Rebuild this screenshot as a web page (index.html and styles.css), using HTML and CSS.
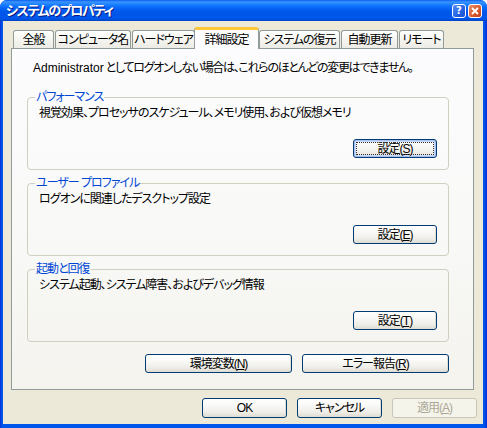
FILE: index.html
```html
<!DOCTYPE html>
<html lang="ja">
<head>
<meta charset="utf-8">
<title>システムのプロパティ</title>
<link rel="stylesheet" href="styles.css">
</head>
<body>
<div class="window">
  <div class="titlebar">
    <span class="title">システムのプロパティ</span>
    <div class="caption-buttons">
      <span class="cap-btn help">?</span>
      <span class="cap-btn close">
        <svg width="8" height="8" viewBox="0 0 8 8"><path d="M1 1 L7 7 M7 1 L1 7" stroke="#fff" stroke-width="1.8" fill="none"/></svg>
      </span>
    </div>
  </div>
  <div class="client">
    <div class="tabs">
      <div class="tab t1">全般</div>
      <div class="tab t2">コンピュータ名</div>
      <div class="tab t3">ハードウェア</div>
      <div class="tab t4 selected">詳細設定</div>
      <div class="tab t5">システムの復元</div>
      <div class="tab t6">自動更新</div>
      <div class="tab t7">リモート</div>
    </div>
    <div class="panel">
      <p class="note"><span class="latin">Administrator</span> としてログオンしない場合は、これらのほとんどの変更はできません。</p>
      <fieldset class="group">
        <legend>パフォーマンス</legend>
        <p class="desc">視覚効果、プロセッサのスケジュール、メモリ使用、および仮想メモリ</p>
        <div class="group-actions"><button class="btn default">設定(<u>S</u>)</button></div>
      </fieldset>
      <fieldset class="group">
        <legend>ユーザー プロファイル</legend>
        <p class="desc">ログオンに関連したデスクトップ設定</p>
        <div class="group-actions"><button class="btn">設定(<u>E</u>)</button></div>
      </fieldset>
      <fieldset class="group">
        <legend>起動と回復</legend>
        <p class="desc">システム起動、システム障害、およびデバッグ情報</p>
        <div class="group-actions"><button class="btn">設定(<u>T</u>)</button></div>
      </fieldset>
      <div class="panel-actions">
        <button class="btn wide">環境変数(<u>N</u>)</button>
        <button class="btn wide">エラー報告(<u>R</u>)</button>
      </div>
    </div>
    <div class="dialog-actions">
      <button class="btn dlg">OK</button>
      <button class="btn dlg">キャンセル</button>
      <button class="btn dlg disabled">適用(<u>A</u>)</button>
    </div>
  </div>
</div>
</body>
</html>
```

FILE: styles.css
```css
html, body {
  margin: 0;
  padding: 0;
  background: #ffffff;
}

body {
  font-family: "Liberation Sans", "Noto Sans CJK JP", sans-serif;
  font-size: 12px;
  font-feature-settings: "palt";
  letter-spacing: -1px;
  color: #000;
}

.window {
  width: 487px;
  height: 428px;
  box-sizing: border-box;
  display: flex;
  flex-direction: column;
  background: linear-gradient(to right, #0831D9 0, #0055EA 2px, #0055EA 484px, #0831D9 487px);
  border-radius: 7px 7px 0 0;
  overflow: hidden;
}

.titlebar {
  height: 21px;
  flex: none;
  display: flex;
  align-items: center;
  justify-content: space-between;
  padding: 0 5px 0 6px;
  background: linear-gradient(to bottom, #0A5FF0 0, #3D95FF 2px, #1F84FF 4px, #0A6CFC 7px, #0059EC 11px, #0055E8 15px, #0058EE 18px, #004ED8 20px, #003DB8 21px);
}

.title {
  color: #fff;
  font-weight: bold;
  font-size: 13px;
  letter-spacing: -1.4px;
  text-shadow: 1px 1px 0 #0A1883;
  line-height: 14px;
}

.caption-buttons {
  display: flex;
  gap: 2px;
}

.cap-btn {
  width: 14px;
  height: 14px;
  box-sizing: border-box;
  border: 1px solid #fff;
  border-radius: 3px;
  display: flex;
  align-items: center;
  justify-content: center;
  color: #fff;
  font-family: "DejaVu Sans", sans-serif;
  font-weight: bold;
  font-size: 10px;
  letter-spacing: 0;
  line-height: 1;
}

.cap-btn.help {
  background: linear-gradient(135deg, #5A8EF5 0, #2261E4 60%, #1A52D0 100%);
}

.cap-btn.close {
  background: linear-gradient(135deg, #E7906E 0, #D8562B 60%, #C0401B 100%);
}

.client {
  flex: 1;
  margin: 0 4px 4px 3px;
  background: #ECE9D8;
  display: flex;
  flex-direction: column;
  padding: 6px 6px 0 8px;
}

.tabs {
  display: flex;
  align-items: flex-end;
  height: 21px;
  padding-left: 1px;
  position: relative;
  z-index: 1;
}

.tab {
  height: 18px;
  box-sizing: border-box;
  border: 1px solid #919B9C;
  border-bottom: none;
  border-radius: 3px 3px 0 0;
  background: linear-gradient(to bottom, #FFFFFF 0, #F7F7F3 40%, #ECEBE5 100%);
  display: flex;
  align-items: center;
  justify-content: center;
  white-space: nowrap;
  margin-right: 1px;
  line-height: 12px;
  padding-top: 1px;
}

.t1 { width: 41px; margin-left: 1px; }
.t2 { width: 76px; }
.t3 { width: 63px; }
.t5 { width: 81px; }
.t6 { width: 57px; }
.t7 { width: 45px; }

.tab.selected {
  height: 22px;
  margin: 0 -1px -1px -2px;
  width: 65px;
  background: #FCFCFE;
  border-top: 3px solid #FFC83C;
  padding-top: 0;
  position: relative;
}

.tab.selected + .tab { margin-left: 1px; }

.panel {
  height: 342px;
  box-sizing: border-box;
  margin-right: 3px;
  border: 1px solid #919B9C;
  background: linear-gradient(to bottom, #FCFCFE 0, #F8F8F6 60%, #F4F3EE 100%);
  padding: 13px 24px 0 15px;
  display: flex;
  flex-direction: column;
}

.note {
  margin: 0 0 0 6px;
  line-height: 12px;
  letter-spacing: -1.3px;
  white-space: nowrap;
}

.latin {
  letter-spacing: 0;
}

.group {
  margin: 17px 0 0 0;
  padding: 0 11px 11px 11px;
  border: 1px solid #D0D0BF;
  border-radius: 4px;
  min-width: 0;
}

.group + .group {
  margin-top: 7px;
}

.group legend {
  color: #0046D5;
  line-height: 12px;
  padding: 0 1px;
  margin-left: -4px;
}

.desc {
  margin: 4px 0 0 0;
  line-height: 12px;
  white-space: nowrap;
}

.group-actions {
  display: flex;
  justify-content: flex-end;
  margin-top: 20px;
}

.btn {
  font: inherit;
  font-feature-settings: "palt";
  letter-spacing: -1px;
  height: 19px;
  box-sizing: border-box;
  border: 1px solid #003C74;
  border-radius: 3px;
  background: linear-gradient(to bottom, #FFFFFF 0, #FAFAF8 30%, #F0EFEA 70%, #E3E1D8 92%, #D6D0C5 100%);
  color: #000;
  padding: 0;
  line-height: 12px;
  width: 84px;
  box-shadow: inset -1px -1px 0 #E0DED4;
}

.btn u {
  text-underline-offset: 1px;
}

.btn.default {
  box-shadow: inset 0 0 0 1px #A9C1F0, inset 0 0 0 2px #CEDCF7;
  outline: 1px dotted #333;
  outline-offset: -4px;
}

.panel-actions {
  display: flex;
  justify-content: flex-end;
  gap: 10px;
  margin-top: 12px;
}

.btn.wide {
  width: 147px;
}

.dialog-actions {
  display: flex;
  justify-content: flex-end;
  gap: 10px;
  margin-top: 8px;
}

.btn.dlg {
  width: 85px;
  height: 20px;
}

.btn.disabled {
  border-color: #C9C7BA;
  background: #F5F4EA;
  color: #ACA899;
  box-shadow: none;
}
```
